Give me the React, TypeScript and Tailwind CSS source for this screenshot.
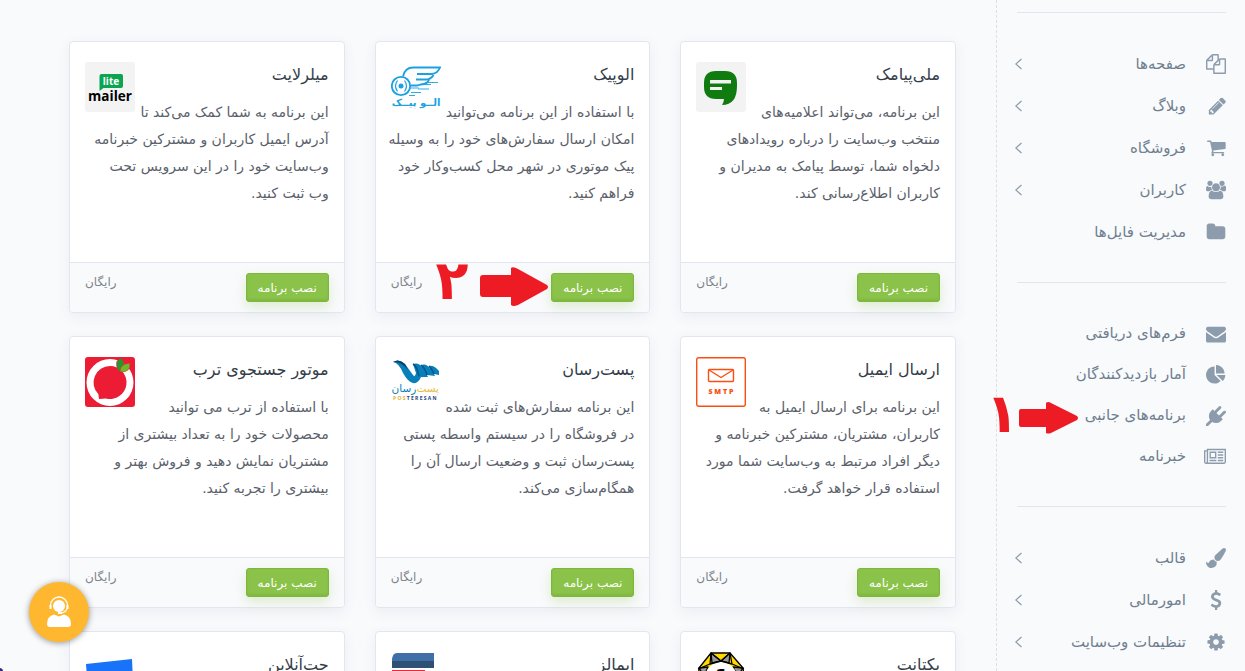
import type { ReactNode } from "react";

type Glyph = { path: string; viewBox?: string; size?: string };
type NavItem = { label: string; icon: Glyph; expandable?: boolean; step?: string };
type AppCard = { title: string; lines: string[]; logo: ReactNode; step?: string };

const icons: Record<string, Glyph> = {
  copy: { path: "M1696 384q40 0 68 28t28 68v1216q0 40-28 68t-68 28h-960q-40 0-68-28t-28-68v-288h-544q-40 0-68-28t-28-68v-672q0-40 20-88t48-76l408-408q28-28 76-48t88-20h416q40 0 68 28t28 68v328q68-40 128-40h416zm-544 213l-299 299h299v-299zm-640-384l-299 299h299v-299zm196 647l316-316v-416h-384v416q0 40-28 68t-68 28h-416v640h512v-256q0-40 20-88t48-76zm956 804v-1152h-384v416q0 40-28 68t-68 28h-416v640h896z" },
  pencil: { path: "M491 1536l91-91-235-235-91 91v107h128v128h107zm523-928q0-22-22-22-10 0-17 7l-542 542q-7 7-7 17 0 22 22 22 10 0 17-7l542-542q7-7 7-17zm-54-192l416 416-832 832h-416v-416zm683 96q0 53-37 90l-166 166-416-416 166-165q36-38 90-38 53 0 91 38l235 234q37 39 37 91z", viewBox: "-128 0 1792 1792" },
  cart: { path: "M704 1536q0 52-38 90t-90 38-90-38-38-90 38-90 90-38 90 38 38 90zm896 0q0 52-38 90t-90 38-90-38-38-90 38-90 90-38 90 38 38 90zm128-1088v512q0 24-16.5 42.5t-40.5 21.5l-1044 122q13 60 13 70 0 16-24 64h920q26 0 45 19t19 45-19 45-45 19h-1024q-26 0-45-19t-19-45q0-11 8-31.5t16-36 21.5-40 15.5-29.5l-177-823h-204q-26 0-45-19t-19-45 19-45 45-19h256q16 0 28.5 6.5t19.5 15.5 13 24.5 8 26 5.5 29.5 4.5 26h1201q26 0 45 19t19 45z", viewBox: "-32 32 1792 1792" },
  users: { path: "M657 896q-162 5-265 128h-134q-82 0-138-40.5t-56-118.5q0-353 124-353 6 0 43.5 21t97.5 42.5 119 21.5q67 0 133-23-5 37-5 66 0 159 93 293zm1071 637q0 120-73 189.5t-194 69.5h-874q-121 0-194-69.5t-73-189.5q0-53 3.5-103.5t14-109 26.5-108.5 43-97.5 62-81 85.5-53.5 111.5-20q10 0 43 21.5t73 48 107 48 135 21.5 135-21.5 107-48 73-48 43-21.5q61 0 111.5 20t85.5 53.5 62 81 43 97.5 26.5 108.5 14 109 3.5 103.5zm-1024-1277q0 106-75 181t-181 75-181-75-75-181 75-181 181-75 181 75 75 181zm704 384q0 159-112.5 271.5t-271.5 112.5-271.5-112.5-112.5-271.5 112.5-271.5 271.5-112.5 271.5 112.5 112.5 271.5zm576 225q0 78-56 118.5t-138 40.5h-134q-103-123-265-128 93-134 93-293 0-29-5-66 66 23 133 23 59 0 119-21.5t97.5-42.5 43.5-21q124 0 124 353zm-128-609q0 106-75 181t-181 75-181-75-75-181 75-181 181-75 181 75 75 181z", viewBox: "64 0 1920 1792" },
  folder: { path: "M1728 608v704q0 92-66 158t-158 66h-1216q-92 0-158-66t-66-158v-960q0-92 66-158t158-66h320q92 0 158 66t66 158v32h672q92 0 158 66t66 158z" },
  envelope: { path: "M1792 710v794q0 66-47 113t-113 47h-1472q-66 0-113-47t-47-113v-794q44 49 101 87 362 246 497 345 57 42 92.5 65.5t94.5 48 110 24.5h2q51 0 110-24.5t94.5-48 92.5-65.5q170-123 498-345 57-39 100-87zm0-294q0 79-49 151t-122 123q-376 261-468 325-10 7-42.5 31t-54 38.5-52 32.5-57.5 27-50 9h-2q-23 0-50-9t-57.5-27-52-32.5-54-38.5-42.5-31q-91-64-262-182.5t-205-142.5q-62-42-117-115.5t-55-136.5q0-78 41.5-130t118.5-52h1472q65 0 112.5 47t47.5 113z" },
  pie: { path: "M768 890l546 546q-106 108-247.5 168t-298.5 60q-209 0-385.5-103t-279.5-279.5-103-385.5 103-385.5 279.5-279.5 385.5-103v762zm187 6h773q0 157-60 298.5t-168 247.5zm709-128h-768v-768q209 0 385.5 103t279.5 279.5 103 385.5z" },
  plug: { path: "M1755 453q37 38 37 90.5t-37 90.5l-401 400 150 150-160 160q-163 163-389.5 186.5t-411.5-100.5l-362 362h-181v-181l362-362q-124-185-100.5-411.5t186.5-389.5l160-160 150 150 400-401q38-37 91-37t90 37 37 90.5-37 90.5l-400 401 234 234 401-400q38-37 91-37t90 37z" },
  news: { path: "M1024 512h-384v384h384v-384zm128 640v128h-640v-128h640zm0-768v640h-640v-640h640zm640 768v128h-512v-128h512zm0-256v128h-512v-128h512zm0-256v128h-512v-128h512zm0-256v128h-512v-128h512zm-1536 960v-960h-128v960q0 26 19 45t45 19 45-19 19-45zm1664 0v-1088h-1536v1088q0 33-11 64h1483q26 0 45-19t19-45zm128-1216v1216q0 80-56 136t-136 56h-1664q-80 0-136-56t-56-136v-1088h256v-128h1792z", viewBox: "0 0 2048 1792", size: "h-5 w-[22px]" },
  brush: { path: "M1615 0q70 0 122.5 46.5t52.5 116.5q0 63-45 151-332 629-465 752-97 91-218 91-126 0-216.5-92.5t-90.5-219.5q0-128 92-212l638-579q59-54 130-54zm-909 1034q39 76 106.5 130t150.5 76l1 71q4 213-129.5 347t-348.5 134q-123 0-218-46.5t-152.5-127.5-86.5-183-29-220q7 5 41 30t62 44.5 59 36.5 46 17q41 0 55-37 25-66 57.5-112.5t69.5-76 88-47.5 103-25.5 125-10.5z" },
  dollar: { path: "M1362 1185q0 153-99.5 263.5t-258.5 136.5v175q0 14-9 23t-23 9h-135q-13 0-22.5-9.5t-9.5-22.5v-175q-66-9-127.5-31t-101.5-44.5-74-48-46.5-37.5-17.5-18q-17-21-2-41l103-135q7-10 23-12 15-2 24 9l2 2q113 99 243 125 37 8 74 8 81 0 142.5-43t61.5-122q0-28-15-53t-33.5-42-58.5-37.5-66-32-80-32.5q-39-16-61.5-25t-61.5-26.5-62.5-31-56.5-35.5-53.5-42.5-43.5-49-35.5-58-21-66.5-8.5-78q0-138 98-242t255-134v-180q0-13 9.5-22.5t22.5-9.5h135q14 0 23 9t9 23v176q57 6 110.5 23t87 33.5 63.5 37.5 39 29 15 14q17 18 5 38l-81 146q-8 15-23 16-14 3-27-7-3-3-14.5-12t-39-26.5-58.5-32-74.5-26-85.5-11.5q-95 0-155 43t-60 111q0 26 8.5 48t29.5 41.5 39.5 33 56 31 60.5 27 70 27.5q53 20 81 31.5t76 35 75.5 42.5 62 50 53 63.5 31.5 76.5 13 94z" },
  cog: { path: "M1152 896q0-106-75-181t-181-75-181 75-75 181 75 181 181 75 181-75 75-181zm512-109v222q0 12-8 23t-20 13l-185 28q-19 54-39 91 35 50 107 138 10 12 10 25t-9 23q-27 37-99 108t-94 71q-12 0-26-9l-138-108q-44 23-91 38-16 136-29 186-7 28-36 28h-222q-14 0-24.5-8.5t-11.5-21.5l-28-184q-49-16-90-37l-141 107q-10 9-25 9-14 0-25-11-126-114-165-168-7-10-7-23 0-12 8-23 15-21 51-66.5t54-70.5q-27-50-41-99l-183-27q-13-2-21-12.5t-8-23.5v-222q0-12 8-23t19-13l186-28q14-46 39-92-40-57-107-138-10-12-10-24 0-10 9-23 26-36 98.5-107.5t94.5-71.5q13 0 26 10l138 107q44-23 91-38 16-136 29-186 7-28 36-28h222q14 0 24.5 8.5t11.5 21.5l28 184q49 16 90 37l142-107q9-9 24-9 13 0 25 10 129 119 165 170 7 8 7 22 0 12-8 23-15 21-51 66.5t-54 70.5q26 50 41 98l183 28q13 2 21 12.5t8 23.5z" },
};

const groups: { rowClass: string; items: NavItem[] }[] = [
  {
    rowClass: "h-[42px]",
    items: [
      { label: "صفحه‌ها", icon: icons.copy, expandable: true },
      { label: "وبلاگ", icon: icons.pencil, expandable: true },
      { label: "فروشگاه", icon: icons.cart, expandable: true },
      { label: "کاربران", icon: icons.users, expandable: true },
      { label: "مدیریت فایل‌ها", icon: icons.folder },
    ],
  },
  {
    rowClass: "h-[41px]",
    items: [
      { label: "فرم‌های دریافتی", icon: icons.envelope },
      { label: "آمار بازدیدکنندگان", icon: icons.pie },
      { label: "برنامه‌های جانبی", icon: icons.plug, step: "۱" },
      { label: "خبرنامه", icon: icons.news },
    ],
  },
  {
    rowClass: "h-[42px]",
    items: [
      { label: "قالب", icon: icons.brush, expandable: true },
      { label: "امورمالی", icon: icons.dollar, expandable: true },
      { label: "تنظیمات وب‌سایت", icon: icons.cog, expandable: true },
    ],
  },
];

const logoClass = "size-[50px] shrink-0";

const ChatLogo = () => (
  <svg viewBox="0 0 50 50" className={logoClass} aria-hidden="true">
    <rect width="50" height="50" rx="3" fill="#f3f3f3" />
    <path d="M20 9H29Q41 9 41 21V24Q41 43 26 43Q28 40 28 37H20Q8 37 8 25V21Q8 9 20 9Z" fill="#107c10" />
    <path d="M14 18H35V21.500H14ZM14 25H26V28H14Z" fill="#f3f3f3" />
  </svg>
);

const BikeLogo = () => (
  <svg viewBox="0 0 50 50" className={logoClass} aria-hidden="true">
    <g fill="none" stroke="#1ba1e2" strokeWidth="1.800">
      <circle cx="10" cy="24" r="9.200" />
      <path d="M6.500 18.500Q2.500 24 6.500 29.500M13.500 18.500Q17.500 24 13.500 29.500" strokeWidth="1.200" />
      <path d="M12 14.500Q14 5.500 22 5.500H49Q47 11 41 12H26M43 11.500Q42 16 36 17.500H25M38 17.500Q37 22 30 22.500L26 23.500H20" />
      <path d="M34 20.500H47M29 22.500H40M19 26H28M27 27H38M20 30.500H30M18 33.500H24" strokeWidth="0.900" />
    </g>
    <circle cx="10" cy="24" r="2.500" fill="#1ba1e2" />
    <text x="25" y="43.500" textAnchor="middle" fill="#1ba1e2" fontSize="10" fontWeight="700">الــو پیــک</text>
  </svg>
);

const MailerLogo = () => (
  <svg viewBox="0 0 50 50" className={logoClass} aria-hidden="true" direction="ltr">
    <rect width="50" height="50" rx="3" fill="#f3f3f3" />
    <path d="M16.500 12H36Q38 12 38 14V24Q38 26 36 26H18.500L14.500 29V14Q14.500 12 16.500 12Z" fill="#09a551" />
    <text x="26" y="22.500" textAnchor="middle" fill="#fff" fontSize="10" fontWeight="700" fontFamily="Open Sans">lite</text>
    <text x="25" y="39" textAnchor="middle" fill="#000" fontSize="13.500" fontWeight="700" fontFamily="Open Sans">mailer</text>
  </svg>
);

const SmtpLogo = () => (
  <svg viewBox="0 0 50 50" className={logoClass} aria-hidden="true" direction="ltr">
    <rect x="0.700" y="0.700" width="48.600" height="48.600" rx="2" fill="#fff" stroke="#fa4f10" strokeWidth="1.400" />
    <rect x="12.500" y="12.500" width="25" height="12" rx="1" fill="none" stroke="#fa4f10" strokeWidth="1.400" />
    <path d="M13 13L25 20.500L37 13" fill="none" stroke="#fa4f10" strokeWidth="1.400" />
    <text x="12.500" y="37" fill="#fa4f10" fontSize="7" fontWeight="800" fontFamily="Open Sans">S M T P</text>
  </svg>
);

const PostLogo = () => (
  <svg viewBox="0 0 50 50" className={logoClass} aria-hidden="true" direction="ltr">
    <path d="M2 5Q8 1 14 7L22 18Q24 21 25 16L22 7Q28 5 32 11L30 8Q36 6 39 12L38 9Q43 8 48 14V18L43 17L44 19L36 18L37 20L30 20Q27 27 22 26Q17 25 12 16Q8 6 2 5Z" fill="#087fb8" />
    <path d="M22 7Q26 9 28 19M30 8Q34 11 36 18M38 9Q41 12 43 17" fill="none" stroke="#07528c" strokeWidth="1.500" />
    <path d="M2 5Q8 1 14 7L17 13Q10 4 2 5Z" fill="#123c70" />
    <text y="35" fontSize="10.500" direction="rtl" x="48"><tspan fill="#e8bd3d">پست‌</tspan><tspan fill="#087fb8">رسان</tspan></text>
    <text x="2" y="43" fontSize="5" fontWeight="700" fontFamily="Open Sans" fill="#19457a"><tspan fill="#e3b42c">P O S</tspan> T E R E S A N</text>
  </svg>
);

const TorobLogo = () => (
  <svg viewBox="0 0 50 50" className={logoClass} aria-hidden="true">
    <rect width="50" height="50" rx="3" fill="#ec1c35" />
    <circle cx="25" cy="25.500" r="23.500" fill="#fff" />
    <path d="M25 9A16.500 16.500 0 0 0 13.300 37.100L14 42L21 41.500A16.500 16.500 0 1 0 25 9Z" fill="#ec1c35" />
    <path d="M32 11Q30 3 36 1Q41 6 38 14Q34 16 32 11Z" fill="#26952f" stroke="#ec1c35" strokeWidth="0.600" />
    <path d="M35 14Q35 7 45 6Q46 15 36 15Z" fill="#68bd25" stroke="#ec1c35" strokeWidth="0.600" />
  </svg>
);

const YektanetLogo = () => (
  <svg viewBox="0 0 50 50" className={logoClass} aria-hidden="true" direction="ltr">
    <g stroke="#000" strokeWidth="1.300" strokeLinejoin="round">
      <path d="M15 1H34L47 16L49 33L25 49L2 33L3 16Z" fill="#ffd900" />
      <path d="M15 1L16 11L25 9ZM34 1L33 11L25 9ZM3 16L12 15L8 24ZM47 16L37 15L42 24Z" fill="#999" />
      <circle cx="25" cy="26" r="16" fill="#fff" stroke="none" />
      <path d="M15 1L25 9L34 1M2 17L14 12L25 9L36 12L48 17M14 12L15 1M36 12L34 1" fill="none" />
    </g>
    <text x="19" y="31" fontSize="20" fontWeight="700" fill="#000">1</text>
  </svg>
);

const EmallsLogo = () => (
  <svg viewBox="0 0 50 50" className={logoClass} aria-hidden="true">
    <path d="M1 9Q1 1 6 1H43V9Z" fill="#3f6fa6" />
    <path d="M1 9H43V16H1Z" fill="#2f4f74" />
    <path d="M1 18H34V27H1Z" fill="#ec2939" />
  </svg>
);

const JetLogo = () => (
  <svg viewBox="0 0 50 50" className={logoClass} aria-hidden="true">
    <path d="M1 12L47 7L49 50H4Z" fill="#1873f8" />
  </svg>
);

const cards: AppCard[] = [
  {
    title: "ملی‌پیامک",
    logo: <ChatLogo />,
    lines: ["این برنامه، می‌تواند اعلامیه‌های", "منتخب وب‌سایت را درباره رویدادهای", "دلخواه شما، توسط پیامک به مدیران و", "کاربران اطلاع‌رسانی کند."],
  },
  {
    title: "الوپیک",
    logo: <BikeLogo />,
    step: "۲",
    lines: ["با استفاده از این برنامه می‌توانید", "امکان ارسال سفارش‌های خود را به وسیله", "پیک موتوری در شهر محل کسب‌وکار خود", "فراهم کنید."],
  },
  {
    title: "میلرلایت",
    logo: <MailerLogo />,
    lines: ["این برنامه به شما کمک می‌کند تا", "آدرس ایمیل کاربران و مشترکین خبرنامه", "وب‌سایت خود را در این سرویس تحت", "وب ثبت کنید."],
  },
  {
    title: "ارسال ایمیل",
    logo: <SmtpLogo />,
    lines: ["این برنامه برای ارسال ایمیل به", "کاربران، مشتریان، مشترکین خبرنامه و", "دیگر افراد مرتبط به وب‌سایت شما مورد", "استفاده قرار خواهد گرفت."],
  },
  {
    title: "پست‌رسان",
    logo: <PostLogo />,
    lines: ["این برنامه سفارش‌های ثبت شده", "در فروشگاه را در سیستم واسطه پستی", "پست‌رسان ثبت و وضعیت ارسال آن را", "همگام‌سازی می‌کند."],
  },
  {
    title: "موتور جستجوی ترب",
    logo: <TorobLogo />,
    lines: ["با استفاده از ترب می توانید", "محصولات خود را به تعداد بیشتری از", "مشتریان نمایش دهید و فروش بهتر و", "بیشتری را تجربه کنید."],
  },
  { title: "یکتانت", logo: <YektanetLogo />, lines: [] },
  { title: "ایمالز", logo: <EmallsLogo />, lines: [] },
  { title: "جت‌آنلاین", logo: <JetLogo />, lines: [] },
];

function Card({ card }: { card: AppCard }) {
  return (
    <article className="flex min-h-[272px] flex-col rounded-[4px] border border-[#e4e6ef] bg-white shadow-[0_4px_14px_rgba(60,70,110,0.07)]">
      <div className="flex-1 px-[15px] pt-5">
        <header className="flex h-[37px] items-start justify-between">
          <h2 className="text-base leading-[26px] text-[#333d49]">{card.title}</h2>
          {card.logo}
        </header>
        <p className="text-sm leading-[27px] text-[#5b616b]">
          {card.lines.map((line) => (
            <span key={line} className="block whitespace-nowrap">{line}</span>
          ))}
        </p>
      </div>
      <footer className="flex h-[50px] items-start justify-between rounded-b-[4px] border-t border-[#e4e6ef] bg-[#f9fafc] px-[15px] pt-[10px]">
        <div className="relative">
          <button type="button" className="h-[29px] w-[83px] whitespace-nowrap rounded-[3px] border border-[#7fb63c] bg-[#8bc34a] text-xs text-white shadow-[0_5px_12px_rgba(139,195,74,0.25),inset_0_-2px_2px_rgba(90,140,30,0.2)]">
            نصب برنامه
          </button>
          {card.step && (
            <div className="absolute right-full top-[-6px] mr-[3px] flex items-start gap-3">
              <svg width="68" height="40" viewBox="0 0 68 40" fill="#ed1c24" aria-hidden="true">
                <path d="M3 8H31V1Q33 -1 38 2L67 18Q69 20 67 22L38 38Q33 40 31 38V30H3Q0 30 0 27V11Q0 8 3 8Z" />
              </svg>
              <span className="text-[54px] font-bold leading-7 text-[#ed1c24]">{card.step}</span>
            </div>
          )}
        </div>
        <span className="text-xs leading-[18px] text-[#7f858d]">رایگان</span>
      </footer>
    </article>
  );
}

export default function App() {
  return (
    <div dir="rtl" className="flex h-screen overflow-hidden bg-[#f9fafc] font-['DejaVu_Sans',sans-serif]">
      <aside className="w-[249px] shrink-0 border-l border-dashed border-[#dcdfe3] pl-5 pr-[19px] pt-3">
        <nav>
          {groups.map((group) => (
            <ul key={group.items[0].label} className="border-t border-[#e0e6f0] pb-[29px] pt-[30px]">
              {group.items.map((item) => (
                <li key={item.label} className={group.rowClass}>
                  <a href="#" className="flex h-full items-center text-[#6f7f90]">
                    <span className="flex w-5 shrink-0 text-[#8d9cac]">
                      <svg viewBox={item.icon.viewBox ?? "0 0 1792 1792"} className={`${item.icon.size ?? "size-5"} shrink-0`} fill="currentColor" aria-hidden="true">
                        <path d={item.icon.path} />
                      </svg>
                    </span>
                    <span className="relative mr-5 whitespace-nowrap text-[15px]">
                      {item.label}
                      {item.step && (
                        <span className="absolute right-full top-[-2px] mr-[6px] flex items-start">
                          <svg width="60" height="32" viewBox="0 0 60 32" fill="#ed1c24" aria-hidden="true">
                            <path d="M2 7H27V1Q29 -1 32 1L58 14Q60 16 58 18L32 31Q29 32 27 31V25H2Q0 25 0 23V9Q0 7 2 7Z" />
                          </svg>
                          <span className="text-[54px] font-bold leading-6 text-[#ed1c24]">{item.step}</span>
                        </span>
                      )}
                    </span>
                    {item.expandable && (
                      <svg width="8" height="12" viewBox="0 0 8 12" className="-ml-0.5 mr-auto" fill="none" stroke="#8d9cac" strokeWidth="1.200" aria-hidden="true">
                        <path d="M6.500 1L0.800 6L6.500 11" />
                      </svg>
                    )}
                  </a>
                </li>
              ))}
            </ul>
          ))}
        </nav>
      </aside>
      <main className="min-w-0 flex-1 pb-5 pl-[69px] pr-10 pt-[41px]">
        <div className="grid grid-cols-3 gap-x-[30px] gap-y-[23px]">
          {cards.map((card) => (
            <Card key={card.title} card={card} />
          ))}
        </div>
      </main>
      <button type="button" aria-label="پشتیبانی" className="fixed bottom-[29px] left-[29px] flex size-[60px] items-center justify-center rounded-full bg-[#ffb72f] shadow-[0_1px_6px_rgba(0,0,0,0.4)]">
        <svg width="26" height="32" viewBox="0 0 26 32" aria-hidden="true">
          <circle cx="13" cy="10" r="6" fill="#fff" />
          <path d="M4.500 11V9.500A8.500 8.500 0 0 1 21.500 9.500V11Q21 16 15 17" fill="none" stroke="#fff" strokeWidth="1.300" />
          <path d="M4.500 9V13M21.500 9V13M12 17H16" stroke="#fff" strokeWidth="2" />
          <path d="M8 18.500L13 20.500L18 18.500Q25 20 25 28Q25 31 22 31H4Q1 31 1 28Q1 20 8 18.500Z" fill="#fff" />
        </svg>
      </button>
      <div className="fixed bottom-[-4px] left-[-4px] size-[7px] rounded-full bg-[#2e2a86]" />
    </div>
  );
}
